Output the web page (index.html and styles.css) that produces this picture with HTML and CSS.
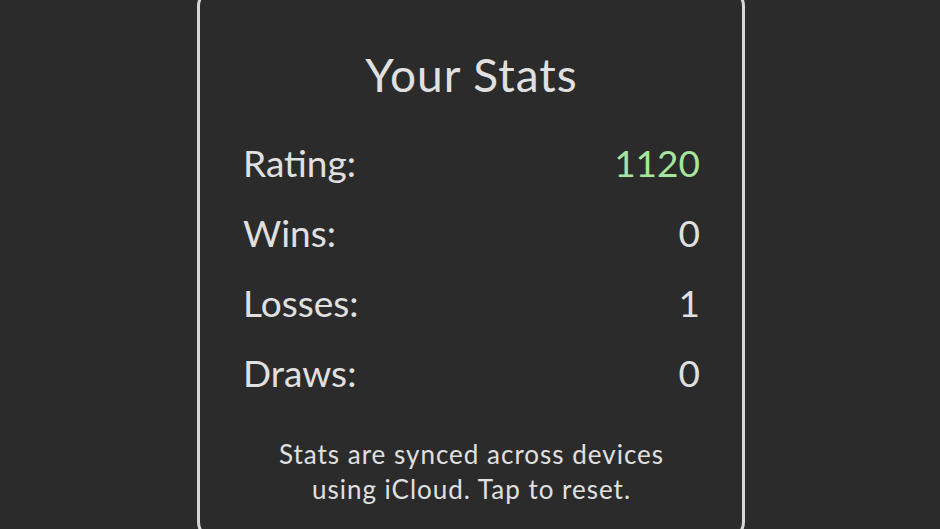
FILE: index.html
```html
<!DOCTYPE html>
<html>
<head>
<meta charset="utf-8">
<link rel="stylesheet" href="styles.css">
</head>
<body>
<div class="stage">
  <div class="card">
    <h1 class="title">Your Stats</h1>
    <div class="rows">
      <div class="row"><span class="label">Rating:</span><span class="value rating">1120</span></div>
      <div class="row"><span class="label">Wins:</span><span class="value">0</span></div>
      <div class="row"><span class="label">Losses:</span><span class="value">1</span></div>
      <div class="row"><span class="label">Draws:</span><span class="value">0</span></div>
    </div>
    <p class="note">Stats are synced across devices<br>using iCloud. Tap to reset.</p>
  </div>
</div>
</body>
</html>
```
FILE: styles.css
```css
html, body {
  margin: 0;
  padding: 0;
  background: #2b2b2b;
  height: 100%;
  overflow: hidden;
}
.stage {
  width: 940px;
  height: 529px;
  display: flex;
  justify-content: center;
}
.card {
  box-sizing: border-box;
  width: 548px;
  height: 552px;
  margin-top: -12px;
  margin-left: 2px;
  border: 3px solid #d6d6d6;
  border-radius: 18px;
  display: flex;
  flex-direction: column;
  align-items: stretch;
  padding: 0 42px 0 43px;
  font-family: "Lato", "Open Sans", sans-serif;
  color: #e0e0e0;
}
.title {
  margin: 54px 0 0 0;
  font-size: 46px;
  font-weight: 400;
  text-align: center;
  line-height: 60px;
  letter-spacing: 1px;
}
.rows {
  margin-top: 23px;
  display: flex;
  flex-direction: column;
}
.row {
  display: flex;
  justify-content: space-between;
  font-size: 37px;
  line-height: 70px;
  height: 70px;
}
.rating {
  color: #a6e59e;
}
.note {
  margin: 29px 0 0 0;
  text-align: center;
  font-size: 26px;
  line-height: 35px;
  letter-spacing: 1px;
}
```
